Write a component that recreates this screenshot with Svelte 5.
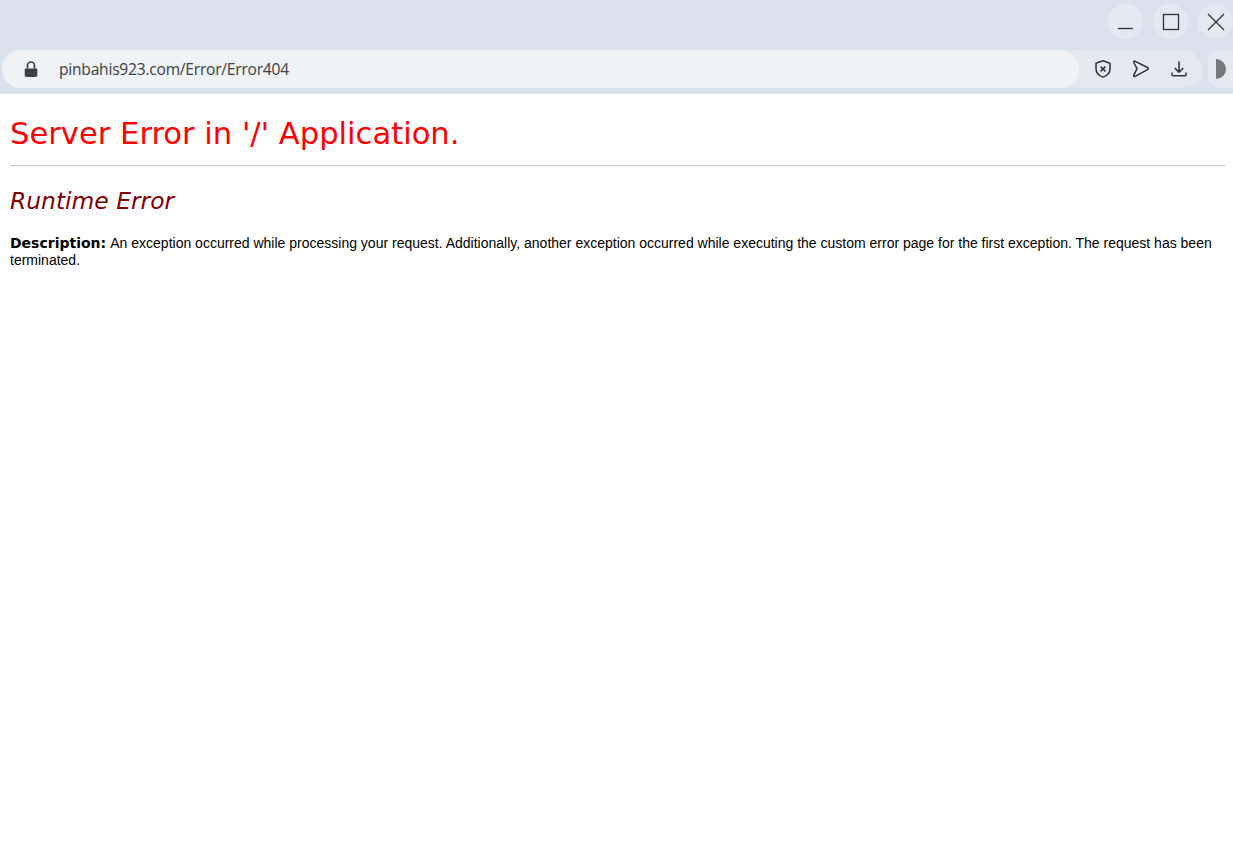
<script>
	const url = 'pinbahis923.com/Error/Error404';
</script>

<svelte:head>
	<title>Runtime Error</title>
</svelte:head>

<div class="chrome">
	<div class="titlebar">
		<button class="win" aria-label="Minimize">
			<svg width="18" height="18" viewBox="0 0 18 18"><path d="M1 15.500h15" /></svg>
		</button>
		<button class="win" aria-label="Maximize">
			<svg width="18" height="18" viewBox="0 0 18 18"><rect x="1.500" y="1.500" width="15" height="15" /></svg>
		</button>
		<button class="win" aria-label="Close">
			<svg width="18" height="18" viewBox="0 0 18 18"><path d="M1 1l16 16M17 1L1 17" /></svg>
		</button>
	</div>
	<div class="toolbar">
		<div class="omnibox">
			<div class="address">
				<svg class="lock" width="14" height="18" viewBox="0 0 14 18">
					<path class="solid" d="M1.500 8.500h11a.8.8 0 0 1 .8.8v6a1.700 1.700 0 0 1-1.700 1.700H2.400a1.700 1.700 0 0 1-1.700-1.700v-6a.8.8 0 0 1 .8-.8z" />
					<path class="hoop" d="M3.500 8.500V5.500a3.500 3.500 0 0 1 7 0v3" />
				</svg>
				<span class="url">{url}</span>
			</div>
			<div class="actions">
				<svg width="18" height="18" viewBox="0 0 18 18">
					<path d="M9 .8l7 2.400v5.700c0 3.800-2.800 6.700-7 8.200-4.200-1.500-7-4.400-7-8.200V3.200z" />
					<path class="x" d="M6.600 6.600l4.800 4.800M11.400 6.600l-4.800 4.800" />
				</svg>
				<svg width="18" height="18" viewBox="0 0 18 18">
					<path d="M3.200 1.300l12.300 6.200c1.100.6 1.100 1.500 0 2.100L3.200 16.300c-1.200.5-1.900-.1-1.400-1.200L5 8.600 1.800 2.500c-.5-1.100.2-1.700 1.400-1.200z" />
				</svg>
				<svg width="18" height="18" viewBox="0 0 18 18">
					<path d="M9 1.500v10.500M4.800 8L9 12.200 13.200 8M2 12.500v2.200c0 .6.400 1 1 1h12c.6 0 1-.4 1-1v-2.200" />
				</svg>
			</div>
		</div>
		<div class="profile"><span class="half"></span></div>
	</div>
</div>

<main>
	<h1>Server Error in '/' Application.</h1>
	<hr />
	<h2>Runtime Error</h2>
	<p>
		<b>Description:</b> An exception occurred while processing your request. Additionally, another exception occurred while executing the custom error page for the first exception. The request has been terminated.
	</p>
</main>

<style>
	:global(body) {
		background: #fff;
		overflow: hidden;
	}

	.chrome {
		height: 94px;
		background: #d8e2ec;
		box-sizing: border-box;
		overflow: hidden;
	}

	.titlebar {
		height: 50px;
		box-sizing: border-box;
		padding-top: 4px;
		display: flex;
		justify-content: flex-end;
		gap: 10px;
	}

	.win {
		width: 35px;
		height: 35px;
		border: none;
		padding: 0;
		border-radius: 50%;
		background: #e2e9f0;
		display: flex;
		align-items: center;
		justify-content: center;
	}

	svg path, svg rect {
		fill: none;
		stroke: #2f3338;
		stroke-width: 1.3;
	}

	.toolbar {
		display: flex;
		height: 38px;
		padding-left: 2px;
		gap: 6px;
	}

	.omnibox {
		width: 1200px;
		flex: none;
		border-radius: 19px;
		background: #e3e9ef;
		display: flex;
		justify-content: space-between;
	}

	.address {
		width: 1077px;
		border-radius: 19px;
		background: #eff3f6;
		display: flex;
		align-items: center;
		padding-left: 22px;
		box-sizing: border-box;
	}

	.lock {
		flex: none;
	}

	svg .solid {
		fill: #3c3f43;
		stroke: none;
	}

	svg .hoop {
		stroke: #3c3f43;
		stroke-width: 1.7;
	}

	.url {
		margin-left: 21px;
		font: 15.600px "Open Sans", sans-serif;
		letter-spacing: -0.230px;
		color: #3c4043;
	}

	.actions {
		display: flex;
		align-items: center;
		gap: 20px;
		padding-right: 14px;
	}

	.actions path {
		stroke-width: 1.500;
		stroke-linejoin: round;
	}

	.profile {
		width: 25px;
		flex: none;
		border-radius: 12px 0 0 12px;
		background: #e3e9ef;
		display: flex;
		align-items: center;
		padding-left: 8px;
		box-sizing: border-box;
	}

	.half {
		width: 10px;
		height: 20px;
		background: #75797d;
		border-radius: 0 10px 10px 0;
	}

	main {
		padding: 0 8px 0 10px;
		color: #000;
	}

	h1 {
		margin: 22px 0 14px;
		font: 400 30.600px "DejaVu Sans", Verdana, sans-serif;
		color: #f00;
	}

	hr {
		margin: 0;
		border: none;
		height: 1px;
		background: #c0c0c0;
	}

	h2 {
		margin: 21px 0 20px;
		font: italic 400 23.400px "DejaVu Sans", Verdana, sans-serif;
		color: #800000;
	}

	p {
		margin: 0;
		font: 14px/17px "Liberation Sans", Arial, sans-serif;
	}

	b {
		font-family: "DejaVu Sans", Verdana, sans-serif;
		font-weight: 700;
		margin-right: 1px;
	}
</style>
